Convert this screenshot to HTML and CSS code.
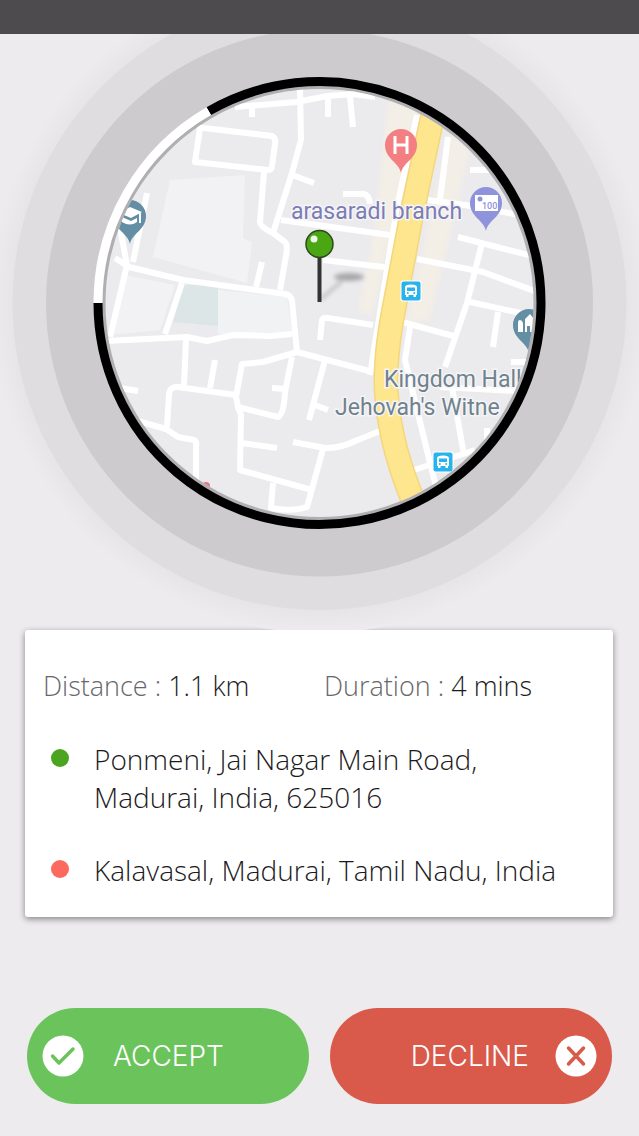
FILE: index.html
```html
<!DOCTYPE html>
<html lang="en">
<head>
    <meta charset="UTF-8">
    <meta name="viewport" content="width=device-width, initial-scale=1.0">
    <title>Ride Request</title>
    <link rel="stylesheet" href="styles.css">
</head>
<body>
    <header class="status-bar"></header>

    <main class="request">
        <svg class="map" viewBox="0 34 639 596" role="img" aria-label="Pickup location map">
            <defs>
                <clipPath id="lens"><circle cx="319.5" cy="303" r="214"/></clipPath>
                <radialGradient id="glow">
                    <stop offset="0.9" stop-color="#e4e2e5"/>
                    <stop offset="1" stop-color="#edebee"/>
                </radialGradient>
                <filter id="soft" x="-50%" y="-50%" width="200%" height="200%"><feGaussianBlur stdDeviation="2"/></filter>
                <g id="bus">
                    <rect x="-10.5" y="-10.5" width="21" height="21" rx="2" fill="#fff"/>
                    <rect x="-9.5" y="-9.5" width="19" height="19" rx="2" fill="#27b4ee"/>
                    <path d="M-6 4V-4Q-6-6.5 0-6.5T6-4V4H5V6H2.500V4H-2.500V6H-5V4Z" fill="#fff"/>
                    <path d="M-4-3.500H4V0H-4Z" fill="#27b4ee"/>
                    <circle cx="-3.2" cy="2" r="1" fill="#27b4ee"/>
                    <circle cx="3.2" cy="2" r="1" fill="#27b4ee"/>
                </g>
                <path id="marker" d="M0 28C-2 17-16 14-16 0A16 16 0 0 1 16 0C16 14 2 17 0 28Z"/>
            </defs>

            <!-- pulse rings -->
            <circle cx="319.5" cy="303" r="330" fill="url(#glow)"/>
            <circle cx="319.5" cy="303" r="307" fill="#dfdde0"/>
            <circle cx="319.5" cy="303" r="273.5" fill="#cdcbce"/>
            <circle cx="319.5" cy="303" r="218" fill="#b0aeb1"/>

            <g clip-path="url(#lens)">
                <rect x="100" y="80" width="440" height="440" fill="#ebeaed"/>
                <path d="M170 180L245 175L243 238L252 242L247 283L153 257Z" fill="#f2f1f4"/>
                <path d="M125 275L175 285L160 330L112 335Z" fill="#f2f1f4"/>
                <path d="M218 290L287 297L292 332L218 334Z" fill="#f1f2f3"/>
                <path d="M183 285H218V326L173 322Z" fill="#dde6e6"/>
                <g filter="url(#soft)" fill="#f3eee6">
                    <path d="M388 100L420 108L372 315L358 312L375 225Z"/>
                    <path d="M450 130L470 150L430 320L405 325L425 240Z"/>
                </g>

                <g class="roads">
                    <path d="M235 107L297 102L327 96L353 94L375 97M252 106V117M328 98V117M350 97L353 127"/>
                    <path d="M300 88L301 140L292 173L273 233L285 242Q288 245 286 256L280 290"/>
                    <path d="M204 128L272 136Q276 138 275 144L272 166Q272 170 268 170L195 162L200 128Z"/>
                    <path d="M264 172L260 222Q260 227 273 233M292 175L314 183"/>
                    <path d="M115 258L129 267L183 280L285 294Q291 295 292 301L297 352"/>
                    <path d="M262 262L256 287M120 228L127 265L110 337M147 193L133 262M182 283L165 334"/>
                    <path d="M105 341L187 337L207 341L233 335L270 336L292 334"/>
                    <path d="M186 340L184 385M215 360L210 388M120 388L138 391"/>
                    <path d="M138 421L166 429L178 437L194 440Q197 441 196 447V482"/>
                    <path d="M167 427L169 394Q170 386 178 387L236 395"/>
                    <path d="M373 372L297 352L263 362L242 364L236 397L238 407L278 417Q284 414 285 392L292 357M272 388L285 389"/>
                    <path d="M238 407L241 415L240 470L312 490M241 443L277 448"/>
                    <path d="M273 483L271 508Q292 512 307 507L323 449M293 442L325 448Q342 448 355 441L380 431"/>
                    <path d="M325 360L309 420M315 405L328 410M320 340L322 320Q323 317 328 318L373 325"/>
                    <path d="M417 115L397 207L382 300L370 375"/>
                    <path d="M448 137L440 200M428 200L465 205L530 217M470 170H490"/>
                    <path d="M458 237L540 258M482 243L467 303L445 367M417 259L483 272L540 293"/>
                    <path d="M470 302L525 314M498 312L493 347M402 322L457 337"/>
                    <path d="M410 327L405 360L430 463L437 490M440 387L535 392M452 387L464 455"/>
                    <path d="M411 471L475 450M487 428V440M511 362H530"/>
                    <path d="M281 220L397 236M323 260L392 268M343 194H364Q369 195 370 204"/>
                </g>

                <path class="highway-edge" d="M435 105L412 213L395 303C387 343 384 373 387 400C390 434 398 465 415 505"/>
                <path class="highway" d="M435 105L412 213L395 303C387 343 384 373 387 400C390 434 398 465 415 505"/>

                <!-- places -->
                <use href="#marker" x="401" y="145" fill="#f47f82"/>
                <path d="M395 136V154M407 136V154M395 145H407" fill="none" stroke="#fff" stroke-width="3"/>

                <use href="#marker" x="486" y="203" fill="#8e93dc"/>
                <rect x="475" y="195" width="23" height="16" fill="#fff"/>
                <circle cx="480" cy="199" r="2.5" fill="#8e93dc"/>
                <text class="note" x="482" y="209">100</text>

                <use href="#marker" x="130" y="216" fill="#648ea3"/>
                <path d="M119 213L130 207L142 212L131 218ZM122 217L131 221L137 218V222Q130 227 122 222ZM139 213H141V223H139Z" fill="#fff"/>

                <use href="#marker" x="529" y="325" fill="#648ea3"/>
                <path d="M518 332V323Q518 320 520 320T523 323V332ZM525 332V319L530 314L534 319V332H530V326H527V332Z" fill="#fff"/>

                <use href="#bus" x="411" y="291"/>
                <use href="#bus" x="443" y="462"/>
                <circle cx="206" cy="486" r="4" fill="#dd7c80"/>

                <text class="place bank" x="291" y="219">arasaradi branch</text>
                <text class="place" x="384" y="387">Kingdom Hall</text>
                <text class="place" x="335" y="415">Jehovah's Witne</text>
            </g>

            <!-- countdown -->
            <path d="M208.75 111.2A221.5 221.5 0 1 1 98 303" fill="none" stroke="#000" stroke-width="9"/>
            <path d="M98 303A221.5 221.5 0 0 1 208.75 111.2" fill="none" stroke="#fff" stroke-width="9"/>

            <!-- pickup pin -->
            <g filter="url(#soft)" opacity="0.45">
                <ellipse cx="349" cy="277" rx="15" ry="4" fill="#555"/>
                <path d="M321 299L342 281" stroke="#888" stroke-width="3"/>
            </g>
            <path d="M319.5 256V302" stroke="#333" stroke-width="4"/>
            <circle cx="319.5" cy="244" r="13.5" fill="#4ba614" stroke="#2b4a1c" stroke-width="1.5"/>
            <circle cx="314" cy="239" r="3.5" fill="#fff" opacity="0.9"/>
        </svg>

        <section class="trip-card">
            <div class="trip-stats">
                <p>Distance : <strong>1.1 km</strong></p>
                <p>Duration : <strong>4 mins</strong></p>
            </div>
            <ul class="stops">
                <li class="pickup">Ponmeni, Jai Nagar Main Road, Madurai, India, 625016</li>
                <li class="dropoff">Kalavasal, Madurai, Tamil Nadu, India</li>
            </ul>
        </section>

        <div class="actions">
            <button type="button" class="btn accept">
                <svg viewBox="0 0 42 42" aria-hidden="true">
                    <circle cx="21" cy="21" r="20.5" fill="#fff"/>
                    <path d="M10.5 21L17 28L31 14" fill="none" stroke="#6bc45b" stroke-width="3.5" stroke-linecap="round" stroke-linejoin="round"/>
                </svg>
                <span>ACCEPT</span>
            </button>
            <button type="button" class="btn decline">
                <span>DECLINE</span>
                <svg viewBox="0 0 42 42" aria-hidden="true">
                    <circle cx="21" cy="21" r="20.5" fill="#fff"/>
                    <path d="M13.5 13L28.5 29M28.5 13L13.5 29" fill="none" stroke="#d95a4a" stroke-width="3.5" stroke-linecap="round"/>
                </svg>
            </button>
        </div>
    </main>
</body>
</html>
```
FILE: styles.css
```css
* {
    box-sizing: border-box;
}

body {
    margin: 0;
    background: #edebee;
    color: #1c1a1d;
    font-family: "Open Sans", "Noto Sans", sans-serif;
    font-size: 27px;
    font-weight: 300;
}

.status-bar {
    height: 34px;
    background: #4e4b4e;
}

/* Map */
.map {
    display: block;
    width: 100%;
}

.roads {
    fill: none;
    stroke: #fff;
    stroke-width: 6px;
    stroke-linejoin: round;
}

.highway,
.highway-edge {
    fill: none;
    stroke: #fde68d;
    stroke-width: 22px;
}

.highway-edge {
    stroke: #f5d67c;
    stroke-width: 25px;
}

.place {
    fill: #70828d;
    stroke: #f5f5f7;
    stroke-width: 3px;
    paint-order: stroke;
    font-family: Roboto, sans-serif;
    font-size: 23px;
    font-weight: 400;
}

.bank {
    fill: #7c7cb5;
}

.note {
    fill: #8e93dc;
    font-family: Roboto, sans-serif;
    font-size: 9px;
    font-weight: 500;
}

/* Trip details */
.trip-card {
    margin: 0 26px 0 25px;
    padding: 37px 18px 28px;
    background: #fff;
    border-radius: 3px;
    box-shadow: 0 2px 6px rgba(0, 0, 0, 0.45);
}

.trip-stats {
    display: grid;
    grid-template-columns: 28fr 27fr;
    color: #69676a;
    line-height: 38px;
}

.trip-stats p {
    margin: 0;
}

.trip-stats strong {
    color: #1c1a1d;
    font-weight: 300;
}

.stops {
    display: grid;
    gap: 35px;
    margin: 35px 0 0;
    padding: 0;
    list-style: none;
    font-size: 28px;
    line-height: 38px;
}

.stops li {
    display: grid;
    grid-template-columns: 18px 1fr;
    gap: 25px;
    padding-left: 8px;
}

.stops li::before {
    content: "";
    width: 18px;
    height: 18px;
    margin-top: 9px;
    border-radius: 50%;
    background: #4ba520;
}

.stops .pickup {
    padding-right: 60px;
}

.stops .dropoff::before {
    background: #fc695d;
}

/* Buttons */
.actions {
    display: grid;
    grid-template-columns: 1fr 1fr;
    gap: 21px;
    margin: 91px 27px 32px;
}

.btn {
    display: flex;
    align-items: center;
    gap: 29px;
    height: 96px;
    padding: 0 15px;
    border: 0;
    border-radius: 48px;
    color: #fff;
    font-family: Inter, sans-serif;
    font-size: 28px;
    font-weight: 300;
}

.btn svg {
    width: 42px;
    height: 42px;
}

.accept {
    background: #6bc45b;
}

.decline {
    justify-content: flex-end;
    gap: 26px;
    background: #d95a4a;
}
```
